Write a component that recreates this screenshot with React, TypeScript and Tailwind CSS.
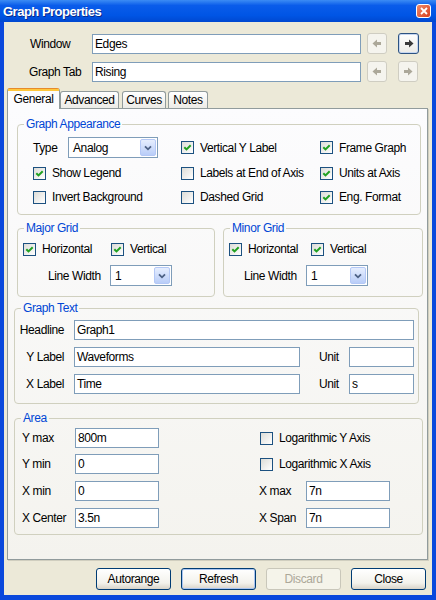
import React from "react";

function Check({ on }: { on: boolean }) {
  return (
    <span className="w-[13px] h-[13px] shrink-0 border border-[#1C5180] bg-[linear-gradient(135deg,#dcdcd7,#ffffff)] flex items-center justify-center">
      {on && (
        <svg width="9" height="9" viewBox="0 0 9 9">
          <path d="M1.3 4.2 L3.5 6.4 L7.7 2.2" stroke="#21A121" strokeWidth="2" fill="none" />
        </svg>
      )}
    </span>
  );
}

function CheckLabel({ on, label }: { on: boolean; label: string }) {
  return (
    <div className="flex items-center h-[20px]">
      <Check on={on} />
      <span className="ml-[6px] whitespace-nowrap">{label}</span>
    </div>
  );
}

function TextBox({ value, className }: { value: string; className: string }) {
  return (
    <div className={`h-[20px] border border-[#7F9DB9] bg-white flex items-center pl-[2px] whitespace-nowrap ${className}`}>
      {value}
    </div>
  );
}

function Select({ value, className }: { value: string; className: string }) {
  return (
    <div className={`h-[21px] border border-[#7F9DB9] bg-white flex items-center ${className}`}>
      <span className="flex-1 pl-[4px]">{value}</span>
      <span className="w-[16px] h-[17px] mr-[1px] rounded-[2px] border border-[#B4C8F6] bg-[linear-gradient(to_bottom,#E6EEFE,#B9CDF8)] flex items-center justify-center">
        <svg width="8" height="6" viewBox="0 0 8 6">
          <path d="M1 1.3 L4 4.3 L7 1.3" stroke="#4D6185" strokeWidth="1.8" fill="none" />
        </svg>
      </span>
    </div>
  );
}

function Group({ title, className, children }: { title: string; className: string; children: React.ReactNode }) {
  return (
    <fieldset className={`border border-[#D0D0BF] rounded-[4px] ${className}`}>
      <legend className="ml-[6px] px-[2px] text-[#0046D5] leading-[13px]">{title}</legend>
      {children}
    </fieldset>
  );
}

function Arrow({ dir, color }: { dir: "l" | "r"; color: string }) {
  return (
    <svg width="10" height="9" viewBox="0 0 10 9" className={dir === "l" ? "-scale-x-100" : ""}>
      <path d="M1 3 H5 V0.5 L9.5 4.5 L5 8.5 V6 H1 Z" fill={color} />
    </svg>
  );
}

function NavBtn({ dir, enabled }: { dir: "l" | "r"; enabled: boolean }) {
  return enabled ? (
    <div className="w-[21px] h-[21px] rounded-[3px] border border-[#2C5282] bg-[linear-gradient(to_bottom,#FFFFFF,#ECEBE6)] shadow-[inset_0_0_0_1px_#C6D6F0] flex items-center justify-center">
      <Arrow dir={dir} color="#3A3A3A" />
    </div>
  ) : (
    <div className="w-[20px] h-[21px] rounded-[3px] border border-[#CFCDC2] bg-[#F5F4EE] flex items-center justify-center">
      <Arrow dir={dir} color="#ACA899" />
    </div>
  );
}

function Btn({ label, kind }: { label: string; kind?: "default" | "disabled" }) {
  if (kind === "disabled")
    return (
      <div className="w-[75px] h-[22px] rounded-[3px] border border-[#C9C7BA] bg-[#F5F4EA] text-[#ACA899] flex items-center justify-center">
        {label}
      </div>
    );
  return (
    <div
      className={`w-[75px] h-[22px] rounded-[3px] border border-[#003C74] bg-[linear-gradient(to_bottom,#FFFFFF,#F3F2EC_70%,#D8D3C8)] flex items-center justify-center ${
        kind === "default" ? "shadow-[inset_0_0_0_1px_#A9C4F0]" : ""
      }`}
    >
      {label}
    </div>
  );
}

export default function App() {
  return (
    <div className="w-[436px] h-[600px] flex flex-col bg-[#0A48DC] font-['Liberation_Sans',Arial,sans-serif] text-[12px] tracking-[-0.4px] text-black leading-none">
      {/* Title bar */}
      <div className="h-[22px] shrink-0 flex items-center justify-between pl-[3px] pr-[5px] bg-[linear-gradient(to_bottom,#3C8CF4,#0A5CEA_25%,#0055E5_70%,#0048D0)]">
        <span className="text-white font-bold text-[13px] tracking-[-0.5px] [text-shadow:1px_1px_#0A2A8A]">Graph Properties</span>
        <div className="w-[15px] h-[14px] rounded-[3px] border border-white bg-[linear-gradient(135deg,#F08A6A,#D8401E)] flex items-center justify-center">
          <svg width="8" height="8" viewBox="0 0 8 8">
            <path d="M1 1 L7 7 M7 1 L1 7" stroke="white" strokeWidth="1.8" />
          </svg>
        </div>
      </div>

      {/* Body */}
      <div className="flex-1 mx-[4px] mb-[5px] bg-[#ECE9D8] flex flex-col">
        <div className="pt-[11px] pl-[26px] flex flex-col">
          <div className="flex items-center h-[21px]">
            <span className="w-[62px]">Window</span>
            <TextBox value="Edges" className="w-[269px]" />
            <div className="ml-[6px]"><NavBtn dir="l" enabled={false} /></div>
            <div className="ml-[11px]"><NavBtn dir="r" enabled={true} /></div>
          </div>
          <div className="flex items-center h-[21px] mt-[7px]">
            <span className="w-[62px] -ml-[1px]">Graph Tab</span>
            <div className="ml-[1px]"><TextBox value="Rising" className="w-[269px]" /></div>
            <div className="ml-[6px]"><NavBtn dir="l" enabled={false} /></div>
            <div className="ml-[11px]"><NavBtn dir="r" enabled={false} /></div>
          </div>
        </div>

        {/* Tabs */}
        <div className="mt-[6px] ml-[3px] h-[20px] flex items-end relative z-10">
          <div className="w-[53px] h-[21px] -mb-px rounded-t-[3px] border border-b-0 border-[#919B9C] border-t-[#E68B2C] bg-[#FCFCFE] flex flex-col">
            <div className="h-[2px] bg-[#FFC73C]" />
            <div className="flex-1 flex items-center justify-center pb-[2px]">General</div>
          </div>
          <div className="w-[59px] h-[17px] rounded-t-[3px] border border-b-0 border-[#919B9C] bg-[linear-gradient(to_bottom,#FFFFFF,#ECEBE6)] flex items-center justify-center">
            Advanced
          </div>
          <div className="ml-[3px] w-[44px] h-[17px] rounded-t-[3px] border border-b-0 border-[#919B9C] bg-[linear-gradient(to_bottom,#FFFFFF,#ECEBE6)] flex items-center justify-center">
            Curves
          </div>
          <div className="ml-[2px] w-[40px] h-[17px] rounded-t-[3px] border border-b-0 border-[#919B9C] bg-[linear-gradient(to_bottom,#FFFFFF,#ECEBE6)] flex items-center justify-center">
            Notes
          </div>
        </div>

        {/* Panel */}
        <div className="ml-[3px] w-[421px] h-[452px] border border-[#919B9C] bg-[linear-gradient(to_bottom,#FCFCFE,#F4F3EE)] shadow-[1px_1px_0_#D0CEBF] pt-[9px] flex flex-col">
          <Group title="Graph Appearance" className="ml-[9px] w-[404px]">
            <div className="pt-[6px] pl-[15px] pb-[7px]">
              <div className="grid grid-cols-[148px_139px_1fr] items-center h-[21px]">
                <div className="flex items-center">
                  <span className="w-[35px]">Type</span>
                  <Select value="Analog" className="w-[90px]" />
                </div>
                <CheckLabel on label="Vertical Y Label" />
                <CheckLabel on label="Frame Graph" />
              </div>
              <div className="grid grid-cols-[148px_139px_1fr] items-center mt-[5px]">
                <CheckLabel on label="Show Legend" />
                <CheckLabel on={false} label="Labels at End of Axis" />
                <CheckLabel on label="Units at Axis" />
              </div>
              <div className="grid grid-cols-[148px_139px_1fr] items-center mt-[4px]">
                <CheckLabel on={false} label="Invert Background" />
                <CheckLabel on={false} label="Dashed Grid" />
                <CheckLabel on label="Eng. Format" />
              </div>
            </div>
          </Group>

          <div className="flex mt-[7px]">
            <Group title="Major Grid" className="ml-[9px] w-[198px]">
              <div className="pt-[4px] pl-[5px] pb-[10px]">
                <div className="grid grid-cols-[88px_1fr]">
                  <CheckLabel on label="Horizontal" />
                  <CheckLabel on label="Vertical" />
                </div>
                <div className="flex items-center mt-[6px] pl-[25px]">
                  <span className="w-[62px]">Line Width</span>
                  <Select value="1" className="w-[62px]" />
                </div>
              </div>
            </Group>
            <Group title="Minor Grid" className="ml-[8px] w-[200px]">
              <div className="pt-[4px] pl-[5px] pb-[10px]">
                <div className="grid grid-cols-[82px_1fr]">
                  <CheckLabel on label="Horizontal" />
                  <CheckLabel on label="Vertical" />
                </div>
                <div className="flex items-center mt-[6px] pl-[15px]">
                  <span className="w-[62px]">Line Width</span>
                  <Select value="1" className="w-[62px]" />
                </div>
              </div>
            </Group>
          </div>

          <Group title="Graph Text" className="mt-[5px] ml-[6px] w-[405px]">
            <div className="pt-[5px] pb-[9px]">
              <div className="flex items-center">
                <span className="w-[59px] pr-[10px] text-right">Headline</span>
                <TextBox value="Graph1" className="w-[340px]" />
              </div>
              <div className="flex items-center mt-[7px]">
                <span className="w-[59px] pr-[10px] text-right">Y Label</span>
                <TextBox value="Waveforms" className="w-[226px]" />
                <span className="ml-[19px] w-[30px]">Unit</span>
                <TextBox value="" className="w-[65px]" />
              </div>
              <div className="flex items-center mt-[7px]">
                <span className="w-[59px] pr-[10px] text-right">X Label</span>
                <TextBox value="Time" className="w-[226px]" />
                <span className="ml-[19px] w-[30px]">Unit</span>
                <TextBox value="s" className="w-[65px]" />
              </div>
            </div>
          </Group>

          <Group title="Area" className="mt-[8px] ml-[6px] w-[409px]">
            <div className="pt-[3px] pl-[7px] pb-[6px]">
              <div className="flex items-center">
                <span className="w-[53px]">Y max</span>
                <TextBox value="800m" className="w-[84px]" />
                <div className="ml-[101px]"><CheckLabel on={false} label="Logarithmic Y Axis" /></div>
              </div>
              <div className="flex items-center mt-[6px]">
                <span className="w-[53px]">Y min</span>
                <TextBox value="0" className="w-[84px]" />
                <div className="ml-[101px]"><CheckLabel on={false} label="Logarithmic X Axis" /></div>
              </div>
              <div className="flex items-center mt-[7px]">
                <span className="w-[53px]">X min</span>
                <TextBox value="0" className="w-[84px]" />
                <span className="ml-[100px] w-[47px]">X max</span>
                <TextBox value="7n" className="w-[84px]" />
              </div>
              <div className="flex items-center mt-[7px]">
                <span className="w-[53px]">X Center</span>
                <TextBox value="3.5n" className="w-[84px]" />
                <span className="ml-[100px] w-[47px]">X Span</span>
                <TextBox value="7n" className="w-[84px]" />
              </div>
            </div>
          </Group>
        </div>

        {/* Buttons */}
        <div className="mt-[8px] flex justify-end gap-[10px] pr-[6px]">
          <Btn label="Autorange" />
          <Btn label="Refresh" kind="default" />
          <Btn label="Discard" kind="disabled" />
          <Btn label="Close" />
        </div>
      </div>
    </div>
  );
}
